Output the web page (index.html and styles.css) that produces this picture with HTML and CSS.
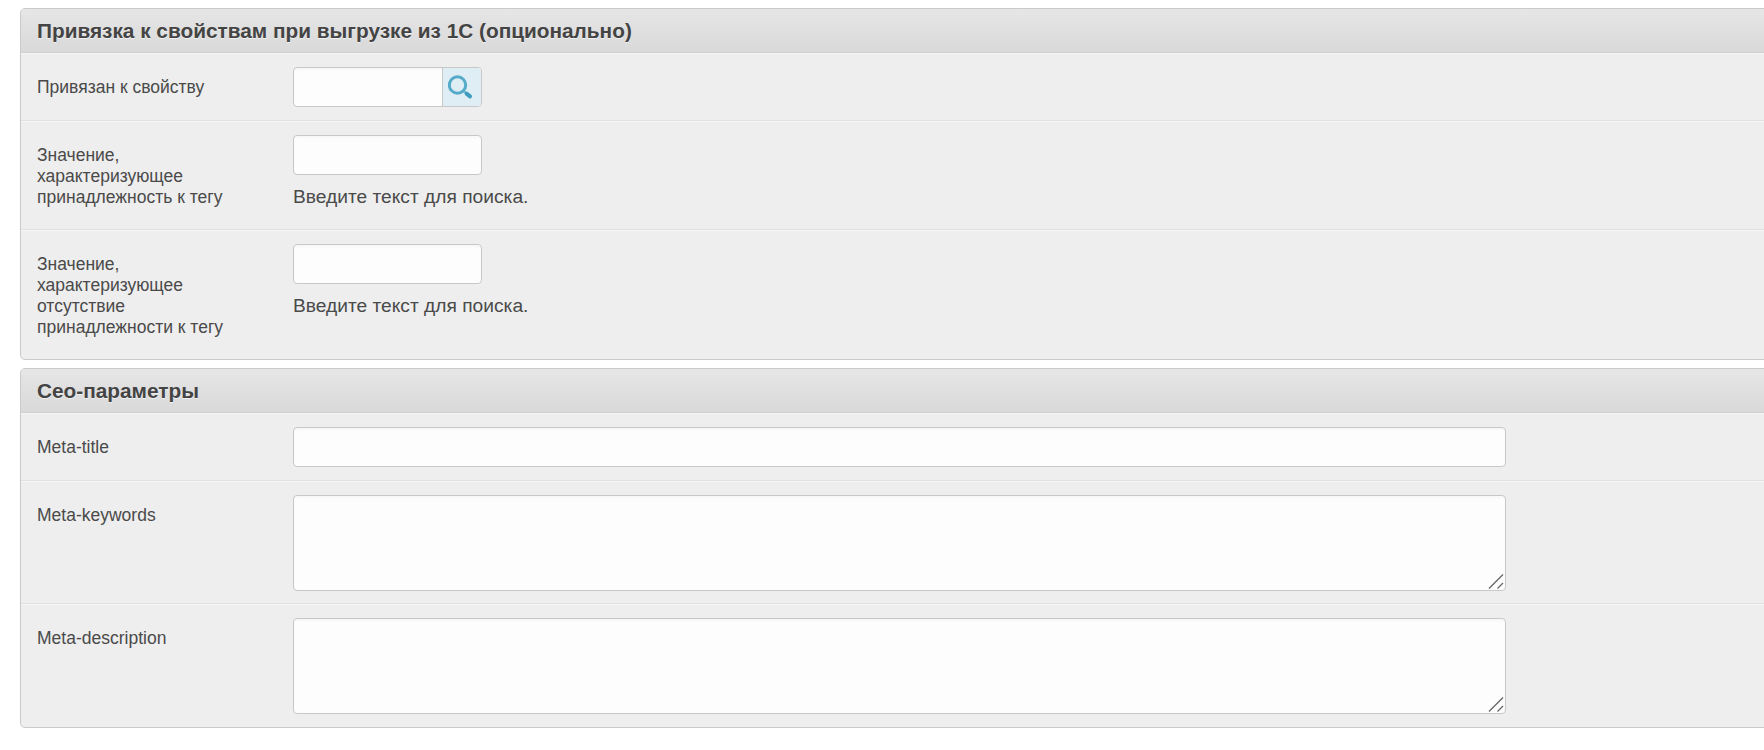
FILE: index.html
```html
<!DOCTYPE html>
<html lang="ru">
<head>
    <meta charset="UTF-8">
    <meta name="viewport" content="width=device-width, initial-scale=1.0">
    <title>Редактирование тега</title>
    <link rel="stylesheet" href="styles.css">
</head>
<body>
    <div class="page">
        <section class="panel">
            <h2 class="panel-title">Привязка к свойствам при выгрузке из 1С (опционально)</h2>
            <div class="form-row row-lookup">
                <label class="form-label">Привязан к свойству</label>
                <div class="form-field">
                    <div class="lookup">
                        <input type="text" class="lookup-input">
                        <button type="button" class="lookup-btn" aria-label="Поиск">
                            <svg width="28" height="28" viewBox="0 0 28 28" fill="none">
                                <circle cx="9.5" cy="12" r="8.2" stroke="#55abc8" stroke-width="3"/>
                                <path d="M15.5 18l1.5 1.2" stroke="#55abc8" stroke-width="2.4"/>
                                <path d="M18.6 20.6l3.4 2.8" stroke="#3f9dbd" stroke-width="4" stroke-linecap="round"/>
                            </svg>
                        </button>
                    </div>
                </div>
            </div>
            <div class="form-row row-tag-yes">
                <label class="form-label">Значение, характеризующее принадлежность к тегу</label>
                <div class="form-field">
                    <input type="text" class="text-input input-short">
                    <p class="hint">Введите текст для поиска.</p>
                </div>
            </div>
            <div class="form-row row-tag-no">
                <label class="form-label">Значение, характеризующее отсутствие принадлежности к тегу</label>
                <div class="form-field">
                    <input type="text" class="text-input input-short">
                    <p class="hint">Введите текст для поиска.</p>
                </div>
            </div>
        </section>

        <section class="panel">
            <h2 class="panel-title">Сео-параметры</h2>
            <div class="form-row row-lookup">
                <label class="form-label">Meta-title</label>
                <div class="form-field">
                    <input type="text" class="text-input input-wide">
                </div>
            </div>
            <div class="form-row row-area">
                <label class="form-label">Meta-keywords</label>
                <div class="form-field">
                    <div class="area-wrap">
                        <textarea class="text-input area"></textarea>
                        <svg class="grip" width="16" height="15" viewBox="0 0 16 15">
                            <path d="M1 14.5L15 0.5M9.5 14.5L15 9" stroke="#666" stroke-width="1.3" fill="none"/>
                        </svg>
                    </div>
                </div>
            </div>
            <div class="form-row row-area">
                <label class="form-label">Meta-description</label>
                <div class="form-field">
                    <div class="area-wrap">
                        <textarea class="text-input area"></textarea>
                        <svg class="grip" width="16" height="15" viewBox="0 0 16 15">
                            <path d="M1 14.5L15 0.5M9.5 14.5L15 9" stroke="#666" stroke-width="1.3" fill="none"/>
                        </svg>
                    </div>
                </div>
            </div>
        </section>
    </div>
</body>
</html>
```

FILE: styles.css
```css
* {
    box-sizing: border-box;
}

html, body {
    margin: 0;
    padding: 0;
    overflow: hidden;
    background: #fff;
}

body {
    font-family: "Liberation Sans", Arial, sans-serif;
    color: #4a4a4a;
    height: 750px;
}

.page {
    padding: 8px 0 0 20px;
    width: 1800px;
}

.panel {
    background: #eeeeee;
    border: 1px solid #cacaca;
    border-radius: 5px 0 0 5px;
    margin-bottom: 8px;
}

.panel-title {
    margin: 0;
    height: 44px;
    padding: 0 16px;
    font-size: 20.8px;
    line-height: 44px;
    font-weight: bold;
    color: #444;
    text-shadow: 0 1px 0 #f0f0f0;
    background: linear-gradient(to bottom, #e6e6e6, #d9d9d9);
    border-bottom: 1px solid #cfcfcf;
    box-shadow: 0 1px 0 #f6f6f6;
    border-radius: 4px 0 0 0;
}

.form-row {
    display: flex;
    padding: 14px 16px 0;
    border-bottom: 1px solid #e0e0e0;
    box-shadow: 0 1px 0 #f6f6f6;
}

.form-row:last-child {
    border-bottom: none;
    box-shadow: none;
}

.row-lookup {
    height: 68px;
}

.row-tag-yes {
    height: 109px;
}

.row-tag-no {
    height: 129px;
}

.row-area {
    height: 123px;
}

.form-label {
    width: 256px;
    flex-shrink: 0;
    padding: 10px 61px 0 0;
    font-size: 17.5px;
    line-height: 21px;
}

.form-field {
    flex: 1;
}

.text-input,
.lookup {
    display: block;
    height: 40px;
    background: #fdfdfd;
    border: 1px solid #c8c8c8;
    border-radius: 4px;
    box-shadow: inset 0 2px 2px #f7f7f7;
    outline: none;
    padding: 0;
    margin: 0;
}

.input-short {
    width: 189px;
}

.input-wide {
    width: 1213px;
}

.area-wrap {
    position: relative;
    width: 1213px;
}

.area {
    width: 100%;
    height: 96px;
    resize: none;
}

.grip {
    position: absolute;
    right: 2px;
    bottom: 2px;
    pointer-events: none;
}

.lookup {
    display: flex;
    width: 189px;
    overflow: hidden;
}

.lookup-input {
    flex: 1;
    min-width: 0;
    border: none;
    background: transparent;
    outline: none;
    padding: 0;
}

.lookup-btn {
    width: 39px;
    padding: 0;
    border: none;
    border-left: 1px solid #c8c8c8;
    background: #dfeef4;
    display: flex;
    align-items: center;
    justify-content: center;
}

.hint {
    margin: 10px 0 0;
    font-size: 19.2px;
    line-height: 24px;
}
```
